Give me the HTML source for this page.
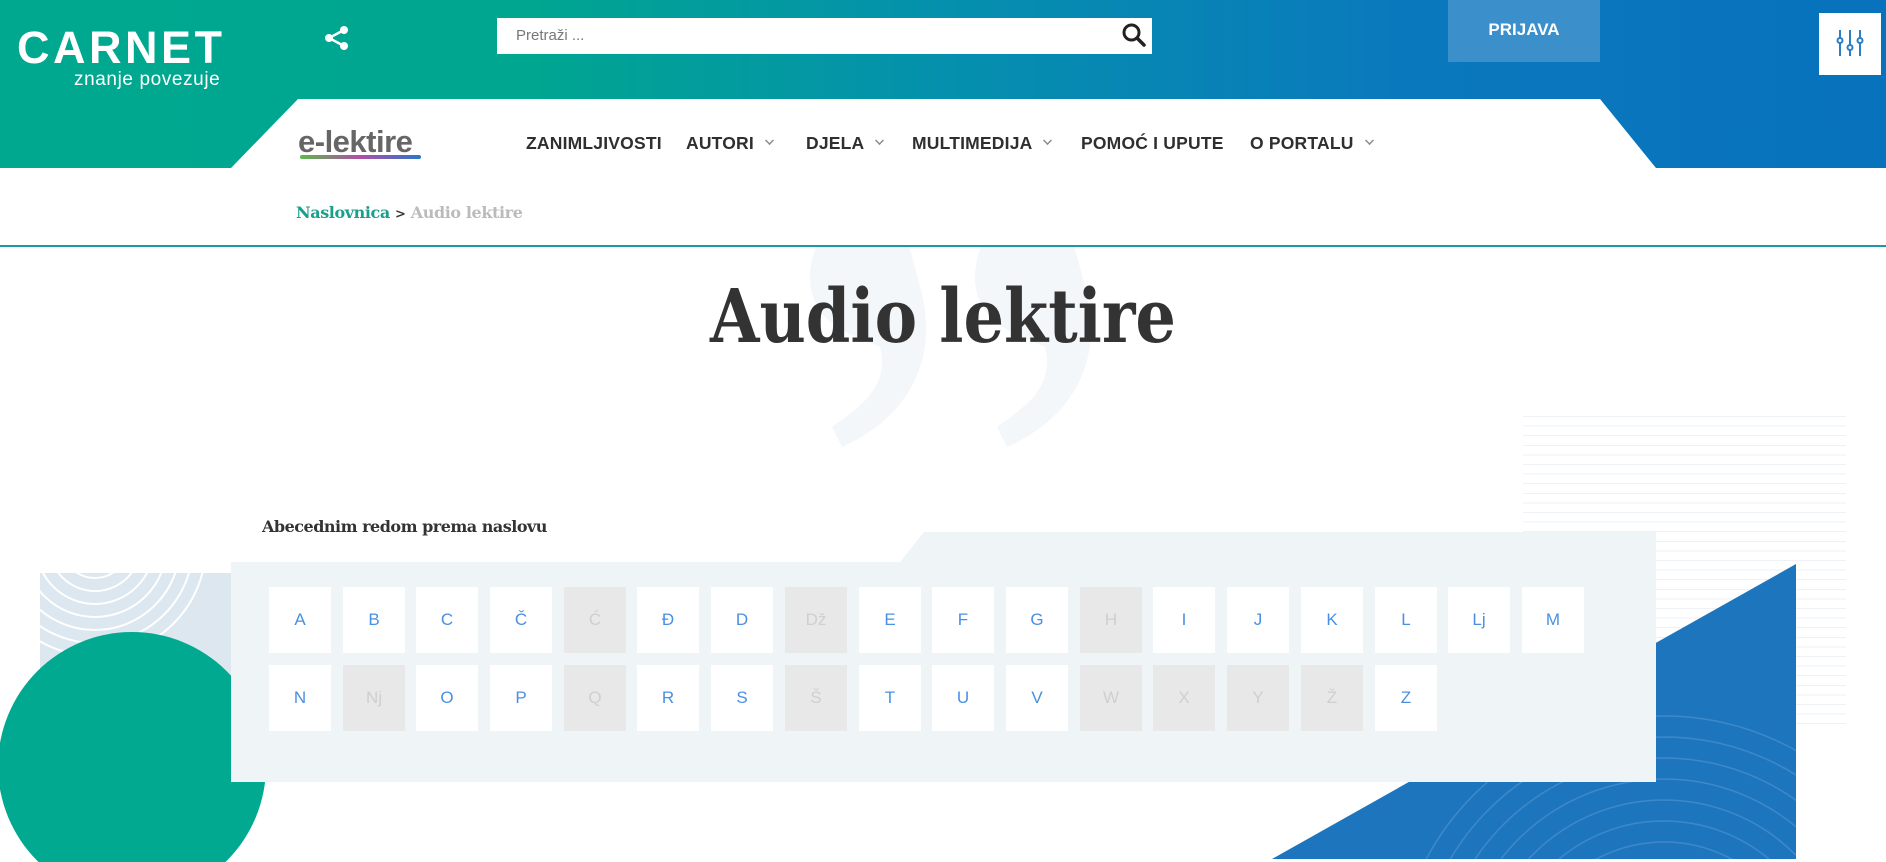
<!DOCTYPE html>
<html style="overflow:hidden"><head><meta charset="utf-8"><style>
*{margin:0;padding:0;box-sizing:border-box}
body{width:1886px;height:862px;overflow:hidden;position:relative;background:#fff;font-family:"Liberation Sans",sans-serif}
.abs{position:absolute}
#hdr{left:0;top:0;width:1886px;height:168px;background:linear-gradient(90deg,#00a88f 0%,#00a690 28%,#0590ad 50%,#0a78bd 75%,#0872bd 100%)}
#band{left:0;top:99px;width:1886px;height:69px;background:#fff;clip-path:polygon(298px 0,1600px 0,1656px 69px,231px 69px)}
.nav{top:133px;font-weight:bold;font-size:17.5px;color:#2f2f2f;letter-spacing:.2px}
.chev{display:inline-block;width:9px;height:9px;border-right:2px solid #888;border-bottom:2px solid #888;transform:rotate(45deg) scale(.7);margin-left:11px;position:relative;top:-4px}
.box{position:absolute;width:62px;height:66px;background:#fff;color:#4a90e2;font-size:17px;text-align:center;line-height:66px}
.box.d{background:#e8e8e8;color:#cfcfcf}
</style></head><body>
<div id="hdr" class="abs"></div>
<div id="band" class="abs"></div>

<div class="abs" style="left:17px;top:22px;color:#fff;font-weight:bold;font-size:45px;letter-spacing:3.5px">CARNET</div>
<div class="abs" style="left:74px;top:69px;color:#fff;font-size:19px;letter-spacing:.6px">znanje povezuje</div>

<svg class="abs" style="left:324px;top:26px" width="26" height="24" viewBox="0 0 26 24"><circle cx="20" cy="4" r="4" fill="#fff"/><circle cx="5" cy="12" r="4" fill="#fff"/><circle cx="20" cy="20" r="4" fill="#fff"/><path d="M20 4 5 12 20 20" stroke="#fff" stroke-width="2.5" fill="none"/></svg>

<div class="abs" style="left:497px;top:18px;width:655px;height:36px;background:#fff"></div>
<div class="abs" style="left:516px;top:27px;color:#777;font-size:15px">Pretraži ...</div>
<svg class="abs" style="left:1121px;top:22px" width="26" height="26" viewBox="0 0 26 26"><circle cx="10.5" cy="10.5" r="7.5" stroke="#222" stroke-width="3" fill="none"/><path d="M16 16 23 23" stroke="#222" stroke-width="3.5" stroke-linecap="round"/></svg>

<div class="abs" style="left:1448px;top:0;width:152px;height:62px;background:#3b8fca;color:#fff;font-size:17px;font-weight:bold;text-align:center;line-height:60px">PRIJAVA</div>
<div class="abs" style="left:1819px;top:13px;width:62px;height:62px;background:#fff"></div>
<svg class="abs" style="left:1834px;top:28px" width="32" height="32" viewBox="0 0 32 32" fill="none" stroke="#2b7fc6" stroke-width="2"><path d="M6 2v8M6 15v13M16 2v15M16 22v6M26 2v8M26 15v13"/><circle cx="6" cy="12.5" r="2.5" fill="#fff"/><circle cx="16" cy="19.5" r="2.5" fill="#fff"/><circle cx="26" cy="12.5" r="2.5" fill="#fff"/></svg>

<div class="abs" style="left:298px;top:124px;color:#666;font-weight:bold;font-size:31px;letter-spacing:-.5px">e-lektire</div>
<div class="abs" style="left:300px;top:155px;width:121px;height:4px;border-radius:2px;background:linear-gradient(90deg,#5cb84a,#b14fa8 50%,#2a78c8)"></div>

<div class="abs nav" style="left:526px">ZANIMLJIVOSTI</div>
<div class="abs nav" style="left:686px">AUTORI<span class="chev"></span></div>
<div class="abs nav" style="left:806px">DJELA<span class="chev"></span></div>
<div class="abs nav" style="left:912px">MULTIMEDIJA<span class="chev"></span></div>
<div class="abs nav" style="left:1081px">POMOĆ I UPUTE</div>
<div class="abs nav" style="left:1250px">O PORTALU<span class="chev"></span></div>

<div class="abs" style="left:296px;top:203px;font-family:'DejaVu Serif',serif;font-weight:bold;font-size:16px;letter-spacing:-.4px"><span style="color:#17a08c">Naslovnica</span> <span style="color:#333;font-size:13px">&gt;</span> <span style="color:#bbb">Audio lektire</span></div>
<div class="abs" style="left:0;top:245px;width:1886px;height:2px;background:#1a9aa6"></div>

<svg class="abs" style="left:780px;top:247px" width="330" height="200" viewBox="0 0 330 200"><g fill="#f3f7fa"><path d="M100 -40 C60 -40 30 -10 30 30 C30 80 80 90 100 100 C110 140 80 160 52 180 L62 200 C130 170 160 110 140 40 C130 0 120 -40 100 -40Z"/><path d="M265 -40 C225 -40 195 -10 195 30 C195 80 245 90 265 100 C275 140 245 160 217 180 L227 200 C295 170 325 110 305 40 C295 0 285 -40 265 -40Z"/></g></svg>

<svg class="abs" style="left:700px;top:270px" width="490" height="90"><text x="10" y="72" textLength="466" lengthAdjust="spacingAndGlyphs" font-family="DejaVu Serif,serif" font-weight="bold" font-size="74" fill="#333">Audio lektire</text></svg>

<div class="abs" style="left:1523px;top:410px;width:323px;height:318px;background:repeating-linear-gradient(180deg,transparent 0,transparent 6px,#eef2f6 6px,#eef2f6 7px,transparent 7px,transparent 9.6px)"></div>

<svg class="abs" style="left:0;top:0" width="1886" height="862"><defs><clipPath id="tri"><polygon points="1796,564 1796,859 1272,859"/></clipPath><clipPath id="sq"><rect x="40" y="573" width="200" height="200"/></clipPath></defs>
<polygon points="1796,564 1796,859 1272,859" fill="#1d76bd"/>
<g clip-path="url(#tri)" fill="none" stroke="#3f88c8" stroke-width="1.5"><circle cx="1664" cy="985" r="80"/><circle cx="1664" cy="985" r="101"/><circle cx="1664" cy="985" r="122"/><circle cx="1664" cy="985" r="143"/><circle cx="1664" cy="985" r="164"/><circle cx="1664" cy="985" r="185"/><circle cx="1664" cy="985" r="206"/><circle cx="1664" cy="985" r="227"/><circle cx="1664" cy="985" r="248"/><circle cx="1664" cy="985" r="269"/></g>
<rect x="40" y="573" width="200" height="200" fill="#dce7ef"/>
<g clip-path="url(#sq)" fill="none" stroke="#fff" stroke-width="2"><circle cx="95" cy="545" r="20"/><circle cx="95" cy="545" r="33"/><circle cx="95" cy="545" r="46"/><circle cx="95" cy="545" r="59"/><circle cx="95" cy="545" r="72"/><circle cx="95" cy="545" r="85"/><circle cx="95" cy="545" r="98"/><circle cx="95" cy="545" r="111"/></g>
<circle cx="132" cy="766" r="134" fill="#00a990"/>
<polygon points="231,562 900,562 924,532 1656,532 1656,782 231,782" fill="#eff4f7"/>
</svg>

<div class="abs" style="left:262px;top:517px;font-family:'DejaVu Serif',serif;font-weight:bold;font-size:16px;color:#333;letter-spacing:-.5px">Abecednim redom prema naslovu</div>

<div class="box" style="left:269px;top:587px">A</div>
<div class="box" style="left:343px;top:587px">B</div>
<div class="box" style="left:416px;top:587px">C</div>
<div class="box" style="left:490px;top:587px">Č</div>
<div class="box d" style="left:564px;top:587px">Ć</div>
<div class="box" style="left:637px;top:587px">Đ</div>
<div class="box" style="left:711px;top:587px">D</div>
<div class="box d" style="left:785px;top:587px">Dž</div>
<div class="box" style="left:859px;top:587px">E</div>
<div class="box" style="left:932px;top:587px">F</div>
<div class="box" style="left:1006px;top:587px">G</div>
<div class="box d" style="left:1080px;top:587px">H</div>
<div class="box" style="left:1153px;top:587px">I</div>
<div class="box" style="left:1227px;top:587px">J</div>
<div class="box" style="left:1301px;top:587px">K</div>
<div class="box" style="left:1375px;top:587px">L</div>
<div class="box" style="left:1448px;top:587px">Lj</div>
<div class="box" style="left:1522px;top:587px">M</div>

<div class="box" style="left:269px;top:665px">N</div>
<div class="box d" style="left:343px;top:665px">Nj</div>
<div class="box" style="left:416px;top:665px">O</div>
<div class="box" style="left:490px;top:665px">P</div>
<div class="box d" style="left:564px;top:665px">Q</div>
<div class="box" style="left:637px;top:665px">R</div>
<div class="box" style="left:711px;top:665px">S</div>
<div class="box d" style="left:785px;top:665px">Š</div>
<div class="box" style="left:859px;top:665px">T</div>
<div class="box" style="left:932px;top:665px">U</div>
<div class="box" style="left:1006px;top:665px">V</div>
<div class="box d" style="left:1080px;top:665px">W</div>
<div class="box d" style="left:1153px;top:665px">X</div>
<div class="box d" style="left:1227px;top:665px">Y</div>
<div class="box d" style="left:1301px;top:665px">Ž</div>
<div class="box" style="left:1375px;top:665px">Z</div>
</body></html>
